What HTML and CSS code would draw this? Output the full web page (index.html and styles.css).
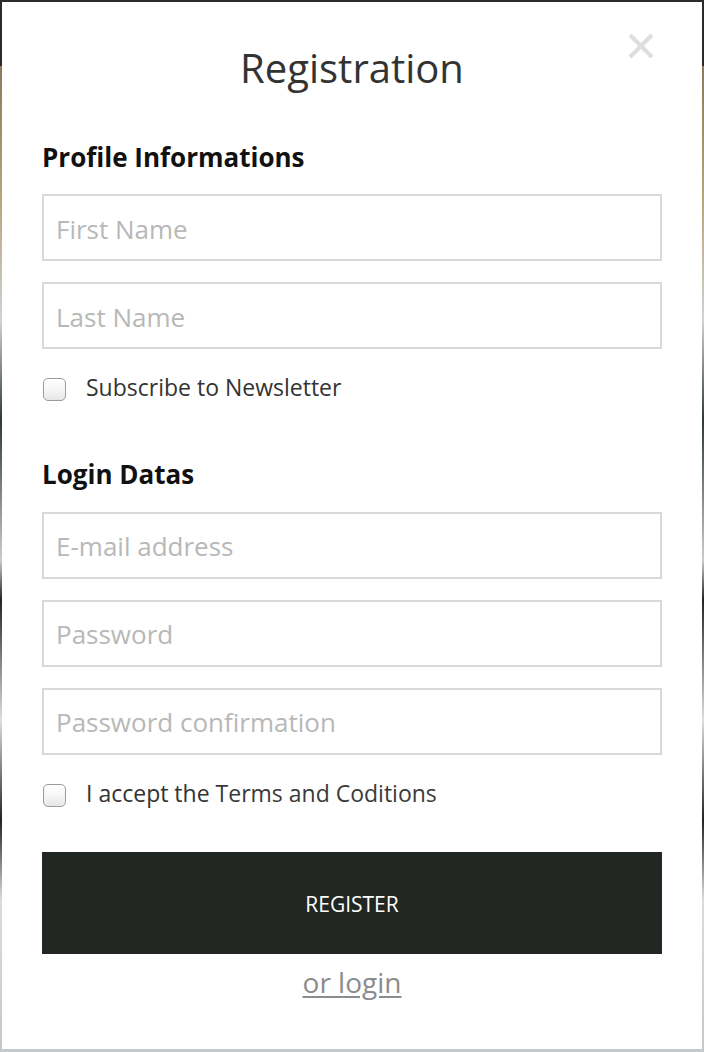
FILE: index.html
```html
<!DOCTYPE html>
<html lang="en">
<head>
<meta charset="utf-8">
<title>Registration</title>
<link rel="stylesheet" href="styles.css">
</head>
<body>
<div class="backdrop">
  <div class="modal">
    <button class="close" type="button" aria-label="Close">
      <svg class="close-icon" viewBox="0 0 26 26" width="26" height="26">
        <line x1="2" y1="2" x2="24" y2="24"/>
        <line x1="24" y1="2" x2="2" y2="24"/>
      </svg>
    </button>
    <h1 class="title">Registration</h1>
    <form class="form">
      <h2 class="section-title">Profile Informations</h2>
      <input class="field" type="text" placeholder="First Name">
      <input class="field" type="text" placeholder="Last Name">
      <label class="check">
        <input class="check-input" type="checkbox">
        <span class="check-label">Subscribe to Newsletter</span>
      </label>

      <h2 class="section-title section-title-login">Login Datas</h2>
      <input class="field" type="email" placeholder="E-mail address">
      <input class="field" type="password" placeholder="Password">
      <input class="field" type="password" placeholder="Password confirmation">
      <label class="check check-terms">
        <input class="check-input" type="checkbox">
        <span class="check-label">I accept the <a class="terms-link" href="#">Terms and Coditions</a></span>
      </label>

      <button class="submit" type="button">Register</button>
      <div class="alt">
        <a class="alt-link" href="#">or login</a>
      </div>
    </form>
  </div>
</div>
</body>
</html>
```

FILE: styles.css
```css
html, body {
  margin: 0;
  padding: 0;
}

body {
  background: #2b2b2b;
  font-family: "Open Sans", "Liberation Sans", sans-serif;
}

.backdrop {
  padding: 2px 2px 3px 2px;
  background:
    linear-gradient(180deg, #2b2b2b 0, #2b2b2b 66px, #8a7a5a 66px, #b9a47c 200px, #cfd3d3 320px, #2e3a3a 420px, #c9cdd0 560px, #1f2626 600px, #dcdfe0 720px, #1e2424 820px, #d8dcdc 900px, #c3c9ca 1052px);
}

.modal {
  position: relative;
  box-sizing: border-box;
  width: 700px;
  height: 1047px;
  background: #ffffff;
  padding: 42px 40px 0 40px;
}

.close {
  position: absolute;
  top: 31px;
  right: 48px;
  width: 26px;
  height: 26px;
  padding: 0;
  border: 0;
  background: transparent;
  cursor: pointer;
}

.close-icon {
  display: block;
}

.close-icon line {
  stroke: #dedede;
  stroke-width: 4;
}

.title {
  margin: 0;
  font-size: 40px;
  line-height: 48px;
  font-weight: 400;
  color: #333333;
  text-align: center;
}

.form {
  display: flex;
  flex-direction: column;
}

.section-title {
  margin: 49.5px 0 21.5px 0;
  font-size: 26px;
  line-height: 31px;
  font-weight: 700;
  color: #111111;
}

.section-title-login {
  margin-top: 58.5px;
}

.field {
  display: block;
  box-sizing: border-box;
  width: 100%;
  height: 67px;
  margin: 0 0 21px 0;
  padding: 2px 12px 0 12px;
  border: 2px solid #d9d9d9;
  border-radius: 0;
  background: #ffffff;
  font-family: "Open Sans", "Liberation Sans", sans-serif;
  font-size: 26px;
  color: #333333;
  outline: none;
}

.field::placeholder {
  color: #b8b8b8;
  opacity: 1;
}

.check {
  display: flex;
  align-items: flex-start;
  margin-top: 2.5px;
  font-size: 23px;
  line-height: 28px;
  color: #333333;
  cursor: pointer;
}

.check-terms {
  margin-top: 3.5px;
}

.check-input {
  appearance: none;
  -webkit-appearance: none;
  box-sizing: border-box;
  width: 23px;
  height: 23px;
  margin: 5px 20px 0 1px;
  flex: none;
  border: 1px solid #9c9c9c;
  border-radius: 5px;
  background: linear-gradient(180deg, #ffffff 0%, #f6f6f6 50%, #e6e6e6 100%);
  box-shadow: inset 0 1px 0 #ffffff;
}

.check-label {
  display: block;
}

.terms-link {
  color: #3a3a3a;
  text-decoration: none;
}

.submit {
  display: block;
  width: 100%;
  height: 102px;
  margin-top: 45px;
  padding-top: 2px;
  border: 0;
  background: #222723;
  color: #ffffff;
  font-family: "Open Sans", "Liberation Sans", sans-serif;
  font-size: 21px;
  text-transform: uppercase;
  cursor: pointer;
}

.alt {
  margin-top: 11px;
  text-align: center;
  font-size: 28px;
  line-height: 34px;
}

.alt-link {
  color: #8c8c8c;
  text-decoration: underline;
  text-underline-offset: 3px;
}
```
